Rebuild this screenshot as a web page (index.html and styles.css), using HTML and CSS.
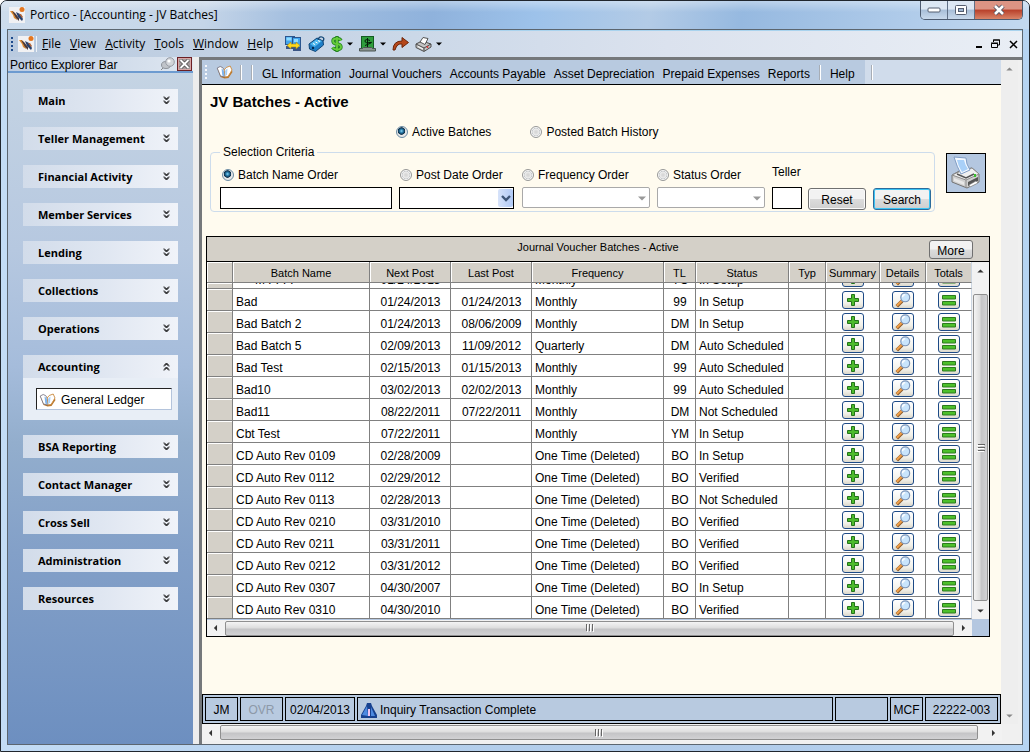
FILE: index.html
```html
<!DOCTYPE html>
<html lang="en">
<head>
<meta charset="utf-8">
<title>Portico - [Accounting - JV Batches]</title>
<link rel="stylesheet" href="styles.css">
</head>
<body>
<svg class="defs" aria-hidden="true">
  <defs>
    <symbol id="logo" viewBox="0 0 16 16">
      <rect width="16" height="16" fill="#f1f1f3"/>
      <path d="M1 4l3 0 3 4 1 5-3-2-1-3z" fill="#e08b2f"/>
      <path d="M3 4l3 2 4 5 0 3-3-3z" fill="#4a3a3c"/>
      <path d="M7 5l4 2 3 5-1 2-4-4z" fill="#27406e"/>
      <path d="M10 7l2 0 2 3-1 1z" fill="#b0653a"/>
      <circle cx="13" cy="2.500" r="2.500" fill="#e4761f"/>
    </symbol>
    <symbol id="book" viewBox="0 0 16 14">
      <path d="M1 4l3 8 4 1.500 4-.5 4-6-1-2z" fill="#b9762a"/>
      <path d="M.7 3l3-1.500q3 .5 4 3.500l.8 7-4.500-1z" fill="#fff" stroke="#6d6a78" stroke-width=".8"/>
      <path d="M7.700 5q1-3 6-4l1.800 4-4 6.500-3 .5z" fill="#fff" stroke="#c98a3e" stroke-width=".9"/>
      <path d="M5 3.500q2 1 2.500 3l.6 5-2.300-1z" fill="#7fb4ec"/>
      <path d="M8.500 6q1-2 2.500-2.500l-.5 6-1.500 1.500z" fill="#a9d0f6"/>
    </symbol>
    <symbol id="down" viewBox="0 0 7 9"><path d="M1 0.500l2.500 2.500 2.500-2.500M1 4.500l2.500 2.500 2.500-2.500M1 1.500l2.500 2.500 2.500-2.500M1 5.500l2.500 2.500 2.500-2.500" fill="none" stroke="#000" stroke-width="1"/></symbol>
    <symbol id="up" viewBox="0 0 7 9"><path d="M1 3.500l2.500-2.500 2.500 2.500M1 7.500l2.500-2.500 2.500 2.500M1 4.500l2.500-2.500 2.500 2.500M1 8.500l2.500-2.500 2.500 2.500" fill="none" stroke="#000" stroke-width="1"/></symbol>
    <symbol id="plus" viewBox="0 0 12 12"><path d="M4.500.5h3v4h4v3h-4v4h-3v-4h-4v-3h4z" fill="#4dbb2c" stroke="#23731a"/></symbol>
    <symbol id="glass" viewBox="0 0 18 18">
      <path d="M2 16l6-6" stroke="#8a5a2c" stroke-width="4"/>
      <path d="M2 15.500l5.500-5.500" stroke="#f0a04a" stroke-width="2.400"/>
      <circle cx="11.500" cy="6" r="5" fill="#c9e5fc" stroke="#7b94b8" stroke-width="1.300"/>
      <path d="M8.500 6a3 3 0 0 1 3-3" fill="none" stroke="#fff" stroke-width="1.500"/>
    </symbol>
    <symbol id="equal" viewBox="0 0 14 11"><path d="M.5.500h13v3.500h-13zM.5 6.500h13v3.500h-13z" fill="#4dc02b" stroke="#2c7a1e"/></symbol>
    <symbol id="tri" viewBox="0 0 8 5"><path d="M0 .5h8l-4 4z" fill="currentColor"/></symbol>
    <symbol id="grip" viewBox="0 0 10 8"><path d="M1.500 0v7M4.500 0v7M7.500 0v7" stroke="#666"/><path d="M2.500 1v7M5.500 1v7M8.500 1v7" stroke="#fff"/></symbol>
  </defs>
</svg>

<div class="window">
  <header class="titlebar">
    <svg class="ico16"><use href="#logo"/></svg>
    <span class="caption">Portico - [Accounting - JV Batches]</span>
    <div class="winbtns">
      <button class="wb" aria-label="Minimize"><svg width="14" height="8" viewBox="0 0 14 8"><rect x="1" y="2" width="12" height="4" rx="1" fill="#fff" stroke="#555e70"/></svg></button>
      <button class="wb" aria-label="Maximize"><svg width="14" height="11" viewBox="0 0 14 11"><rect x="1.500" y=".5" width="11" height="9" rx="1" fill="#fff" stroke="#555e70"/><rect x="4.500" y="3.500" width="5" height="3" fill="#9fb6d2" stroke="#555e70"/></svg></button>
      <button class="wb close" aria-label="Close"><svg width="14" height="12" viewBox="0 0 14 12"><path d="M3 2l8 8M11 2l-8 8" stroke="#4f5262" stroke-width="4.500"/><path d="M3 2l8 8M11 2l-8 8" stroke="#fff" stroke-width="2.600"/></svg></button>
    </div>
  </header>

  <div class="client">
    <nav class="menubar">
      <span class="dots blue"></span>
      <svg class="ico16"><use href="#logo"/></svg>
      <span class="vline"></span>
      <div class="menus">
        <a href="#"><u>F</u>ile</a><a href="#"><u>V</u>iew</a><a href="#"><u>A</u>ctivity</a><a href="#"><u>T</u>ools</a><a href="#"><u>W</u>indow</a><a href="#"><u>H</u>elp</a>
      </div>
      <div class="tools">
        <button class="tool" aria-label="Transfer"><svg width="17" height="16" viewBox="0 0 17 16"><rect x=".5" y=".5" width="9" height="8" fill="#43a5ee" stroke="#2a568f"/><rect x="1.500" y="1.500" width="5" height="3" fill="#8fdcff"/><rect x="7.500" y="1.500" width="8" height="10" fill="#43a5ee" stroke="#2a568f"/><rect x="9" y="3" width="4" height="3" fill="#8fdcff"/><path d="M1 10h7v3h-7zM8 12h8v3h-8z" fill="#3a5585"/><path d="M2 9.500l4-3.500v2h5v-2l4 3.500-4 3.500v-2h-5v2z" fill="#ffd91c" stroke="#a8861a" stroke-width=".6"/></svg></button>
        <button class="tool" aria-label="Rates"><svg width="17" height="16" viewBox="0 0 17 16"><path d="M1 8l8-6 6 3 .5 4-8 6.500-6-2.500z" fill="#1f7fc8" stroke="#0f4474"/><path d="M2 8l7-5 5 2-7.500 6z" fill="#4fb8ee"/><path d="M10 4q1-4 4-3t1 4" fill="none" stroke="#0f4474" stroke-width="1.300"/><path d="M5 7.500l2 1M7.500 6l2 1M10 4.500l2 1" stroke="#fff"/><circle cx="5" cy="12" r="1.200" fill="#06294b"/></svg></button>
        <button class="tool" aria-label="Cash"><svg width="12" height="16" viewBox="0 0 12 16"><path d="M10 4.500q-1-2-4-2-4 0-4 2.500t4 3 4 3-4 2.500q-3 0-4.500-2M6 0v16" fill="none" stroke="#1f7f1c" stroke-width="3.400"/><path d="M10 4.500q-1-2-4-2-4 0-4 2.500t4 3 4 3-4 2.500q-3 0-4.500-2M6 1v14" fill="none" stroke="#66cc3a" stroke-width="1.900"/></svg><svg class="tri"><use href="#tri"/></svg></button>
        <button class="tool" aria-label="Deposit"><svg width="17" height="16" viewBox="0 0 17 16"><rect x="2.500" y=".5" width="12" height="12" fill="#2f9d3c" stroke="#145c22"/><path d="M11 4.500q-5-2-5 .5t5 1.500-5 3M8.500 2v9" fill="none" stroke="#041c08" stroke-width="1"/><path d="M.5 12.500h3l1-1h8l1 1h3v2.500h-16z" fill="#8b9591" stroke="#4b5552"/></svg><svg class="tri"><use href="#tri"/></svg></button>
        <button class="tool" aria-label="Forward"><svg width="17" height="14" viewBox="0 0 17 14"><path d="M1 13q0-9 9-9v-3.500l6.500 5-6.500 5v-3.500q-5-1-7 6z" fill="#b5471b" stroke="#6f2508"/></svg></button>
        <button class="tool" aria-label="Print"><svg width="17" height="15" viewBox="0 0 17 15"><path d="M1 7l6-3 9 3v3l-7 4.500-8-4z" fill="#c4c4c4" stroke="#4d4d4d"/><path d="M5 5l3-4.500 5 1-3 6z" fill="#fff" stroke="#555"/><path d="M1 7l8 4 7-4M9 11v3" fill="none" stroke="#4d4d4d"/><path d="M3 9.500l5 2.500" stroke="#fff"/><circle cx="12.500" cy="10" r="1" fill="#d33"/></svg><svg class="tri"><use href="#tri"/></svg></button>
      </div>
      <div class="mdibtns">
        <button aria-label="Minimize child"><svg width="8" height="10" viewBox="0 0 8 10"><path d="M1 8h6" stroke="#000" stroke-width="2"/></svg></button>
        <button aria-label="Restore child"><svg width="10" height="10" viewBox="0 0 10 10"><path d="M2.500 3v-2h6v5h-2M2 1h7M.5 4.500h6v4h-6zM0 4h7" fill="none" stroke="#000"/></svg></button>
        <button aria-label="Close child"><svg width="9" height="9" viewBox="0 0 9 9"><path d="M1 1l7 7M8 1l-7 7" stroke="#000" stroke-width="1.500"/></svg></button>
      </div>
    </nav>

    <div class="workspace">
      <aside class="explorer">
        <div class="exphead"><span>Portico Explorer Bar</span>
          <button class="pin" aria-label="Pin"><svg width="16" height="14" viewBox="0 0 16 14"><path d="M1 13l5-5" stroke="#888"/><ellipse cx="6" cy="8" rx="4.500" ry="3.500" fill="#c0c4ca" stroke="#8f949c"/><circle cx="10" cy="5" r="4.300" fill="#d2d5da" stroke="#989ca4"/><circle cx="9" cy="4" r="1.600" fill="#fff"/></svg></button>
          <button class="xbtn" aria-label="Close explorer"><svg width="11" height="10" viewBox="0 0 11 10"><path d="M1.500 1l8 8M9.500 1l-8 8" stroke="#444" stroke-width="3.400"/><path d="M1.500 1l8 8M9.500 1l-8 8" stroke="#fff" stroke-width="2"/></svg></button>
        </div>
        <div class="groups">
          <button class="group">Main<svg><use href="#down"/></svg></button>
          <button class="group">Teller Management<svg><use href="#down"/></svg></button>
          <button class="group">Financial Activity<svg><use href="#down"/></svg></button>
          <button class="group">Member Services<svg><use href="#down"/></svg></button>
          <button class="group">Lending<svg><use href="#down"/></svg></button>
          <button class="group">Collections<svg><use href="#down"/></svg></button>
          <button class="group">Operations<svg><use href="#down"/></svg></button>
          <div class="opengroup">
            <button class="group">Accounting<svg><use href="#up"/></svg></button>
            <a class="ledger" href="#"><svg><use href="#book"/></svg>General Ledger</a>
          </div>
          <button class="group">BSA Reporting<svg><use href="#down"/></svg></button>
          <button class="group">Contact Manager<svg><use href="#down"/></svg></button>
          <button class="group">Cross Sell<svg><use href="#down"/></svg></button>
          <button class="group">Administration<svg><use href="#down"/></svg></button>
          <button class="group">Resources<svg><use href="#down"/></svg></button>
        </div>
      </aside>

      <div class="mdi">
        <div class="mdirow">
          <main class="page">
            <nav class="subbar">
              <div class="subleft">
                <span class="dots"></span>
                <svg class="book"><use href="#book"/></svg>
                <span class="sep"></span><span class="sep"></span>
                <div class="sublinks"><a href="#">GL Information</a><a href="#">Journal Vouchers</a><a href="#">Accounts Payable</a><a href="#">Asset Depreciation</a><a href="#">Prepaid Expenses</a><a href="#">Reports</a></div>
                <span class="sep"></span><a class="help" href="#">Help</a>
              </div>
              <span class="sep"></span>
            </nav>
            <div class="content">
              <h1>JV Batches - Active</h1>
              <div class="modes">
                <label><input type="radio" name="mode" checked>Active Batches</label>
                <label><input type="radio" name="mode">Posted Batch History</label>
              </div>
              <div class="criteria-row">
                <fieldset>
                  <legend>Selection Criteria</legend>
                  <div class="fields">
                    <div class="field name"><label><input type="radio" name="order" checked>Batch Name Order</label><input type="text" class="box" aria-label="Batch name"></div>
                    <div class="field post"><label><input type="radio" name="order">Post Date Order</label><div class="combo live"><select aria-label="Post date"><option></option></select><span class="drop"><svg width="10" height="7" viewBox="0 0 10 7"><path d="M1 1l4 4 4-4" fill="none" stroke="#3e5677" stroke-width="2.400"/></svg></span></div></div>
                    <div class="field freq"><label><input type="radio" name="order">Frequency Order</label><div class="combo"><select aria-label="Frequency" disabled><option></option></select><span class="drop"><svg class="tri"><use href="#tri"/></svg></span></div></div>
                    <div class="field stat"><label><input type="radio" name="order">Status Order</label><div class="combo"><select aria-label="Status" disabled><option></option></select><span class="drop"><svg class="tri"><use href="#tri"/></svg></span></div></div>
                    <div class="field teller"><label for="teller">Teller</label><input id="teller" type="text" class="box"></div>
                    <button class="btn">Reset</button>
                    <button class="btn default">Search</button>
                  </div>
                </fieldset>
                <button class="printbtn" aria-label="Print"><svg width="30" height="34" viewBox="0 0 30 34">
                  <path d="M1 19l9-5 11-2 7 6v8l-12 6-15-6z" fill="#cfcfcf" stroke="#737373"/>
                  <path d="M1 19l14 5 13-6-7-6-11 3z" fill="#f0f0f0" stroke="#8b8b8b"/>
                  <path d="M3 1l12 1q0 6 4 12l-9 4q-4-7-7-17z" fill="#f4f9ff" stroke="#7f9cc4"/><path d="M6 4l7 0q1 5 4 9l-6 3q-4-6-5-12z" fill="#a9d0f8"/>
                  <path d="M6 18l9 4 8-4" fill="none" stroke="#555" stroke-width="1.500"/>
                  <path d="M15 24v8" stroke="#8b8b8b"/><path d="M3 22l10 4v3l-10-4z" fill="#e8e8e8"/>
                  <path d="M17 26l10-5v4l-10 5z" fill="#555"/><path d="M18 29l7-4 2 2-8 4z" fill="#fff" stroke="#777" stroke-width=".6"/>
                  <rect x="23" y="18" width="2" height="3" fill="#39c02c"/></svg></button>
              </div>

              <section class="grid">
                <div class="gridcap"><span class="gt">Journal Voucher Batches - Active</span><button class="more">More</button></div>
                <div class="gridbody">
                  <table>
                    <colgroup><col class="c0"><col class="c1"><col class="c2"><col class="c2"><col class="c4"><col class="c5"><col class="c6"><col class="c7"><col class="c8"><col class="c9"><col class="c9"></colgroup>
                    <thead><tr><th></th><th>Batch Name</th><th>Next Post</th><th>Last Post</th><th>Frequency</th><th>TL</th><th>Status</th><th>Typ</th><th>Summary</th><th>Details</th><th>Totals</th></tr></thead>
                    <tbody id="rows"></tbody>
                  </table>
                  <div class="vscroll">
                    <span class="arrow a-up"><svg><use href="#tri"/></svg></span>
                    <span class="thumb"><svg><use href="#grip"/></svg></span>
                    <span class="arrow"><svg><use href="#tri"/></svg></span>
                  </div>
                </div>
                <div class="gridfoot">
                  <div class="hscroll">
                    <span class="arrow a-left"><svg><use href="#tri"/></svg></span>
                    <span class="thumb"><svg><use href="#grip"/></svg></span>
                    <span class="arrow a-right"><svg><use href="#tri"/></svg></span>
                  </div>
                  <span class="corner"></span>
                </div>
              </section>
            </div>

            <footer class="status">
              <span class="cell s1">JM</span><span class="cell s2">OVR</span><span class="cell s3">02/04/2013</span>
              <span class="cell msg"><svg width="16" height="15" viewBox="0 0 16 15"><path d="M6 0h4l1 3 5 9v3h-16v-3l5-9z" fill="#17418f"/><path d="M6 3l-5 9 6 1zM10 4l4 9h-4z" fill="#4d8ae0"/><path d="M7 6h2v7h-2z" fill="#eec6f4"/></svg>Inquiry Transaction Complete</span>
              <span class="cell s5"></span><span class="cell s1">MCF</span><span class="cell s7">22222-003</span>
            </footer>
          </main>
          <div class="vscroll off">
            <span class="arrow a-up"><svg><use href="#tri"/></svg></span>
            <span class="arrow"><svg><use href="#tri"/></svg></span>
          </div>
        </div>
        <div class="hscroll outer">
          <span class="arrow a-left"><svg><use href="#tri"/></svg></span>
          <span class="thumb"><svg><use href="#grip"/></svg></span>
          <span class="arrow a-right"><svg><use href="#tri"/></svg></span>
        </div>
      </div>
    </div>
  </div>
</div>
<script src="script.js"></script>
</body>
</html>
```
FILE: styles.css
```css
* { box-sizing: border-box; }
body { margin: 0; font: 12px/14px "Liberation Sans", Arial, sans-serif; color: #000; }
button, input, select { font: inherit; color: inherit; margin: 0; padding: 0; }
button { border: 0; background: none; }
a { color: inherit; text-decoration: none; }
svg { display: block; flex: none; }
.defs { position: absolute; width: 0; height: 0; }
.ico16 { width: 16px; height: 16px; }

.window { min-height: 100vh; display: flex; flex-direction: column; padding: 0 6px 6px; border: 1px solid #20262e; border-radius: 7px 7px 0 0; background: linear-gradient(90deg, #c3dcf5, #b4cfec 40%, #b1cbe9 70%, #b6d4f2); }
.titlebar { height: 28px; margin: 0 -6px; padding: 0 6px; display: flex; align-items: center; gap: 5px; border-radius: 6px 6px 0 0; font-family: "Open Sans", "Noto Sans", sans-serif;
  background: linear-gradient(180deg, rgba(255,255,255,.35), rgba(255,255,255,0) 40%), linear-gradient(100deg, #cddcec 0, #c5d5e8 20%, #a5c0e0 28%, #8fb2dc 42%, #9dc2ea 52%, #b3cbe6 63%, #96b9e0 72%, #abc8e8 85%, #c3d9f0); }
.titlebar .ico16 { margin-left: 2px; }
.caption { flex: 1; white-space: nowrap; }
.winbtns { align-self: flex-start; display: flex; height: 19px; border: 1px solid #4d5b70; border-top: 0; border-radius: 0 0 5px 5px; overflow: hidden; }
.wb { width: 27px; display: grid; place-items: center; border-right: 1px solid #5f6f86; background: linear-gradient(#dce7f3 45%, #a8bed8 50%, #c8d9ec); }
.wb.close { width: 47px; border: 0; background: linear-gradient(#dc9484 45%, #b8402a 50%, #d98468); }

.client { flex: 1; display: flex; flex-direction: column; border: 1px solid #5c6670; background: #ededed; }
.menubar { height: 27px; display: flex; align-items: center; padding: 0 4px 0 3px; border-top: 1px solid #a9d3ee; background: linear-gradient(90deg, #b9cadf, #cbd8e8 40%, #dbe2ee 65%, #e9eef5); font-family: "Open Sans", "Noto Sans", sans-serif; }
.menubar .ico16 { margin-left: 5px; }
.dots { width: 2px; height: 15px; background: repeating-linear-gradient(#f6f8fb 0 2px, transparent 2px 4px); }
.dots.blue { background: repeating-linear-gradient(#1c4a8c 0 2px, transparent 2px 4px); }
.vline { width: 1px; height: 16px; background: #eef3f8; margin-left: 2px; }
.menus { display: flex; gap: 9px; margin-left: 5px; }
.tools { display: flex; align-items: center; gap: 6px; margin-left: 12px; }
.tool { display: flex; align-items: center; gap: 4px; }
.tool .tri { width: 6px; height: 4px; }
.mdibtns { margin-left: auto; display: flex; align-items: center; gap: 8px; }

.workspace { flex: 1; display: flex; }
.explorer { width: 185px; flex: none; background: linear-gradient(#c6d5e4 0, #b6c8e0 28%, #a5bcdb 45%, #93aecd 56%, #83a0c8 72%, #6d8fc0); }
.exphead { height: 16px; display: flex; align-items: center; gap: 1px; padding: 0 1px 0 2px; border-bottom: 2px solid #6d9bd0; background: linear-gradient(90deg, #bccce1, #dfe7f1); }
.exphead span { flex: 1; padding-top: 2px; }
.xbtn { width: 15px; height: 14px; display: grid; place-items: center; border: 1px solid #6b2024; background: #a59a9b; box-shadow: inset 0 0 0 1px #d8a5a5; }
.groups { display: flex; flex-direction: column; gap: 15px; padding: 16px 15px; }
.group { width: 100%; height: 23px; display: flex; align-items: center; justify-content: space-between; padding: 0 8px 0 15px; text-align: left; font: bold 11px/14px "Open Sans", "Noto Sans", sans-serif; background: linear-gradient(90deg, #d2dcea, #dfe6f1 50%, #f0f3f9); }
.group svg { width: 7px; height: 9px; }
.opengroup { background: #e8eef6; padding-bottom: 10px; }
.ledger { display: flex; align-items: center; gap: 5px; height: 22px; margin: 10px 6px 0 13px; padding: 1px 2px 0; background: #fff; border: 1px solid #b4c4dc; border-top-color: #222; border-left-color: #222; }
.ledger svg, .book { width: 17px; height: 14px; }

.mdi { flex: 1; min-width: 0; display: flex; flex-direction: column; margin-left: 6px; padding: 0 4px 3px 0; border-left: 3px solid #75787b; border-top: 3px solid #75787b; background: #f0f0f0; }
.mdirow { flex: 1; display: flex; }
.page { flex: 1; min-width: 0; display: flex; flex-direction: column; background: #fffbef; }
.subbar { height: 25px; display: flex; align-items: center; background: #d0dceb; border-bottom: 1px solid #000; }
.subleft { align-self: stretch; display: flex; align-items: center; background: #b8cae0; padding: 0 6px 0 3px; }
.subleft a { padding-top: 4px; }
.book { margin: 0 7px 0 9px; }
.sep { width: 2px; height: 15px; background: #a7adb5; border-right: 1px solid #fff; margin-right: 9px; }
.subbar > .sep { margin-left: 6px; }
.sublinks { display: flex; gap: 8px; margin-right: 9px; white-space: nowrap; }
.help { margin-right: 4px; }

.content { flex: 1; padding: 9px 11px 20px 4px; }
h1 { margin: 0 0 0 4px; font-size: 15px; line-height: 16px; }
.modes { display: flex; gap: 39px; margin: 15px 0 6px 190px; }
label { display: flex; align-items: center; gap: 3px; white-space: nowrap; }
input[type=radio] { appearance: none; width: 12px; height: 12px; flex: none; border: 1px solid #979898; border-radius: 50%; background: radial-gradient(#d8d8d8 15%, #eee 45%, #c6c9cc 54%, #f6f6f6 62%); }
input[type=radio]:checked { background: radial-gradient(circle at 45% 40%, #8fd8f5 0, #2a7fae 20%, #0d2c46 42%, #e8e8e8 50%); border-color: #6b8ba4; }
.criteria-row { display: flex; align-items: flex-start; gap: 11px; margin: 0 4px 0 4px; }
fieldset { flex: 1; min-width: 0; margin: 0; padding: 6px 3px 2px 9px; border: 1px solid #cddcec; border-radius: 4px; }
legend { margin-left: 0; padding: 0 3px; line-height: 14px; }
.fields { display: flex; align-items: flex-end; gap: 7px; }
.field { display: flex; flex-direction: column; gap: 5px; }
.field label { gap: 4px; padding-left: 2px; }
.modes label { gap: 4px; }
.name { flex: 172; } .post { flex: 115; } .freq { flex: 128; margin-left: 1px; } .stat { flex: 108; } .teller { flex: 30; margin-right: -1px; }
.freq label, .stat label { padding-left: 0; }
.teller label { padding: 0 0 3px; }
.post label { padding-left: 1px; }
.box { width: 100%; height: 22px; border: 1px solid #000; background: #fff; padding: 0 3px; }
.combo { position: relative; }
.combo select { display: block; appearance: none; width: 100%; height: 21px; margin-bottom: 1px; border: 1px solid #a9a9a9; border-radius: 2px; background: #fff; opacity: 1; }
.combo.live select { height: 22px; margin: 0; border-color: #000; border-radius: 0; }
.drop { position: absolute; top: 2px; right: 1px; width: 15px; height: 18px; display: grid; place-items: center; color: #999; pointer-events: none; }
.drop .tri { width: 8px; height: 5px; }
.live .drop { background: linear-gradient(90deg, #d7e3fa, #b0c9f5); border-radius: 2px; }
.btn { width: 58px; height: 22px; margin-bottom: -1px; padding-top: 2px; border: 1px solid #707070; border-radius: 3px; background: linear-gradient(#f2f2f2 48%, #dcdcdc 52%, #cfcfcf); box-shadow: inset 0 0 0 1px #fafafa; }
.btn.default { border-color: #2c6c9c; box-shadow: inset 0 0 0 1px #3cc4f4; }
.printbtn { width: 40px; height: 40px; margin-top: 8px; display: grid; place-items: center; border: 1px solid #000; background: #b4c7e0; }

.grid { margin-top: 24px; border: 1px solid #000; background: #b4c7e0; }
.gridcap { height: 25px; display: grid; grid-template-columns: 1fr auto 1fr; padding: 3px 16px 0; background: #d4d0c8; border-bottom: 1px solid #000; font-size: 11px; }
.gt { grid-column: 2; }
.more { justify-self: end; width: 44px; height: 19px; padding-top: 3px; font-size: 12px; border: 1px solid #707070; border-radius: 3px; background: linear-gradient(#f2f2f2 48%, #dcdcdc 52%, #cfcfcf); overflow: hidden; }
.gridbody { display: flex; }
table { flex: 1; min-width: 0; table-layout: fixed; border-collapse: separate; border-spacing: 0; background: #fff; }
.c0 { width: 26px; } .c1 { width: 137px; } .c2 { width: 81px; } .c4 { width: 132px; } .c5 { width: 32px; } .c6 { width: 93px; } .c7 { width: 37px; } .c8 { width: 54px; } .c9 { width: 46px; }
th { height: 21px; padding: 1px 0 0; font-size: 11px; line-height: 14px; font-weight: normal; background: #d4d0c8; border: solid #808080; border-width: 0 1px 1px 0; box-shadow: inset 1px 1px #fff; }
td { height: 22px; padding: 5px 2px 0 3px; white-space: nowrap; border: solid #808080; border-width: 0 1px 1px 0; }
th:last-child, td:last-child { border-right-color: #ccd6e2; }
td:first-child { background: #d4d0c8; box-shadow: inset 1px 1px #fff; }
.mid { text-align: center; }
td.act { padding: 2px 0 1px; }
.cellbtn { width: 22px; height: 18px; margin: 0 auto; display: grid; place-items: center; border: 1px solid #1d4a86; border-radius: 3px; background: linear-gradient(#fff, #f2f1ea 70%, #dcd8cc); }
.peek td { height: 6px; padding-top: 0; padding-bottom: 0; }
.clip { height: 5px; display: flex; flex-direction: column; justify-content: flex-end; overflow: hidden; }
.clip span { margin-bottom: 1px; }
.clip .cellbtn { flex: none; margin-bottom: 1px; }
.mid .clip { align-items: center; }
.indent { padding-left: 19px; }

.arrow { flex: none; width: 17px; height: 17px; display: grid; place-items: center; color: #333; }
.arrow svg { width: 7px; height: 4px; }
.a-up svg { transform: rotate(180deg); }
.a-left svg { transform: rotate(90deg); }
.a-right svg { transform: rotate(-90deg); }
.vscroll { width: 17px; flex: none; display: flex; flex-direction: column; align-items: center; background: #f2f2f2; }
.vscroll .thumb { flex: 1; width: 15px; margin: 15px 0 1px; display: grid; place-items: center; border: 1px solid #8f8f8f; border-radius: 2px; background: linear-gradient(90deg, #f4f4f4, #dedede 45%, #c4c4c6 55%, #d2d2d4); }
.vscroll .thumb svg { width: 10px; height: 8px; transform: rotate(90deg); }
.vscroll.off { justify-content: space-between; background: #eee; }
.off .arrow { color: #888; }
.gridfoot { display: flex; }
.gridfoot .hscroll { border-top: 1px solid #b4c7e0; }
.hscroll { flex: 1; height: 17px; display: flex; align-items: center; background: #f2f2f2; }
.hscroll .thumb { flex: 1; height: 15px; margin: 0 1px; display: grid; place-items: center; border: 1px solid #8f8f8f; border-radius: 2px; background: linear-gradient(#f4f4f4, #dedede 45%, #c4c4c6 55%, #d2d2d4); }
.hscroll .thumb svg { width: 10px; height: 8px; }
.corner { width: 17px; }
.hscroll.outer { flex: none; margin-right: 16px; }
.outer .a-right { margin-left: 6px; }

.status { display: flex; gap: 2px; height: 30px; padding: 2px; border: 1px solid #000; background: #b8cae0; }
.cell { display: flex; align-items: center; justify-content: center; padding-top: 2px; border: 1px solid #000; white-space: nowrap; }
.s1 { width: 33px; } .s2 { width: 43px; color: #8d99a8; } .s3 { width: 70px; } .s5 { width: 53px; } .s7 { width: 73px; }
.msg { flex: 1; justify-content: flex-start; gap: 3px; padding-left: 3px; }
```
FILE: script.js
```js
const data = [
  ["Bad", "01/24/2013", "01/24/2013", "Monthly", "99", "In Setup"],
  ["Bad Batch 2", "01/24/2013", "08/06/2009", "Monthly", "DM", "In Setup"],
  ["Bad Batch 5", "02/09/2013", "11/09/2012", "Quarterly", "DM", "Auto Scheduled"],
  ["Bad Test", "02/15/2013", "01/15/2013", "Monthly", "99", "Auto Scheduled"],
  ["Bad10", "03/02/2013", "02/02/2013", "Monthly", "99", "Auto Scheduled"],
  ["Bad11", "08/22/2011", "07/22/2011", "Monthly", "DM", "Not Scheduled"],
  ["Cbt Test", "07/22/2011", "", "Monthly", "YM", "In Setup"],
  ["CD Auto Rev 0109", "02/28/2009", "", "One Time (Deleted)", "BO", "In Setup"],
  ["CD Auto Rev 0112", "02/29/2012", "", "One Time (Deleted)", "BO", "Verified"],
  ["CD Auto Rev 0113", "02/28/2013", "", "One Time (Deleted)", "BO", "Not Scheduled"],
  ["CD Auto Rev 0210", "03/31/2010", "", "One Time (Deleted)", "BO", "Verified"],
  ["CD Auto Rev 0211", "03/31/2011", "", "One Time (Deleted)", "BO", "Verified"],
  ["CD Auto Rev 0212", "03/31/2012", "", "One Time (Deleted)", "BO", "Verified"],
  ["CD Auto Rev 0307", "04/30/2007", "", "One Time (Deleted)", "BO", "In Setup"],
  ["CD Auto Rev 0310", "04/30/2010", "", "One Time (Deleted)", "BO", "Verified"]
];

const button = (icon, label, w, h) =>
  `<button class="cellbtn" aria-label="${label}"><svg width="${w}" height="${h}"><use href="#${icon}"/></svg></button>`;
const actions = [
  button("plus", "Summary", 12, 12),
  button("glass", "Details", 18, 16),
  button("equal", "Totals", 14, 11)
];
const centred = [1, 2, 4];

const row = (r) =>
  "<tr><td></td>" +
  r.map((t, i) => `<td class="${centred.includes(i) ? "mid" : ""}">${t}</td>`).join("") +
  "<td></td>" + actions.map((a) => `<td class="act">${a}</td>`).join("") + "</tr>";

// The row scrolled partly under the header shows only its lower edge.
const peekRow = (r) =>
  '<tr class="peek"><td></td>' +
  r.map((t, i) => `<td class="${centred.includes(i) ? "mid" : ""}"><div class="clip${i === 0 ? " indent" : ""}"><span>${t}</span></div></td>`).join("") +
  "<td></td>" + actions.map((a) => `<td class="act"><div class="clip">${a}</div></td>`).join("") + "</tr>";

document.getElementById("rows").innerHTML =
  peekRow(["M FFFF", "01/24/2013", "", "Monthly", "YC", "In Setup"]) + data.map(row).join("");
```
